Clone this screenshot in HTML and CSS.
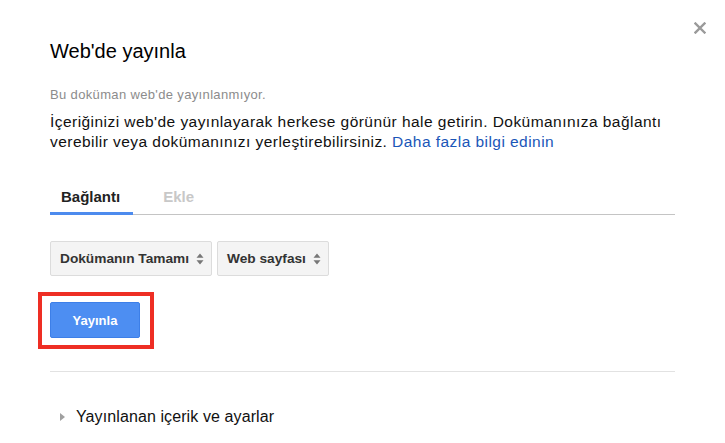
FILE: index.html
```html
<!DOCTYPE html>
<html lang="tr">
<head>
<meta charset="utf-8">
<title>Web'de yayınla</title>
<link rel="stylesheet" href="styles.css">
</head>
<body>
<div class="dialog">
  <button class="close" aria-label="Kapat">
    <svg width="12" height="12" viewBox="0 0 12 12"><path d="M1.5 1.5 L10.5 10.5 M10.5 1.5 L1.5 10.5" stroke="#9a9a9a" stroke-width="2.4" stroke-linecap="square" fill="none"/></svg>
  </button>
  <h1 class="title">Web'de yayınla</h1>
  <p class="status">Bu doküman web'de yayınlanmıyor.</p>
  <p class="desc">İçeriğinizi web'de yayınlayarak herkese görünür hale getirin. Dokümanınıza bağlantı verebilir veya dokümanınızı yerleştirebilirsiniz. <a class="link" href="#">Daha fazla bilgi edinin</a></p>
  <div class="tabs">
    <div class="tab active">Bağlantı</div>
    <div class="tab">Ekle</div>
  </div>
  <div class="selects">
    <div class="select">Dokümanın Tamamı<span class="arrows"><svg width="8" height="12" viewBox="0 0 8 12"><path d="M4 0.5 L7.5 4.8 L0.5 4.8 Z M4 11.5 L7.5 7.2 L0.5 7.2 Z" fill="#777"/></svg></span></div>
    <div class="select">Web sayfası<span class="arrows"><svg width="8" height="12" viewBox="0 0 8 12"><path d="M4 0.5 L7.5 4.8 L0.5 4.8 Z M4 11.5 L7.5 7.2 L0.5 7.2 Z" fill="#777"/></svg></span></div>
  </div>
  <div class="highlight">
    <button class="publish">Yayınla</button>
  </div>
  <hr class="divider">
  <div class="expander">
    <svg class="tri" width="5" height="8" viewBox="0 0 5 8"><path d="M0 0 L5 4 L0 8 Z" fill="#a0a0a0"/></svg>
    <span>Yayınlanan içerik ve ayarlar</span>
  </div>
</div>
</body>
</html>
```
FILE: styles.css
```css
html, body {
  margin: 0;
  padding: 0;
  background: #fff;
}
body {
  font-family: "Liberation Sans", Arial, sans-serif;
  color: #222;
}
.dialog {
  width: 625px;
  padding: 40px 50px 0 50px;
}
.close {
  position: absolute;
  top: 22px;
  left: 694px;
  width: 12px;
  height: 12px;
  padding: 0;
  border: 0;
  background: none;
  display: block;
}
.close svg { display: block; }
.title {
  margin: 0;
  font-size: 20px;
  font-weight: normal;
  line-height: 23px;
  color: #000;
}
.status {
  margin: 24px 0 0 0;
  font-size: 13px;
  letter-spacing: 0.35px;
  line-height: 16px;
  color: #8c8c8c;
}
.desc {
  width: 625px;
  margin: 9px 0 0 0;
  font-size: 15.5px;
  letter-spacing: 0.45px;
  line-height: 20px;
  color: #111;
}
.link {
  color: #1a56b8;
  text-decoration: none;
}
.tabs {
  margin-top: 35px;
  display: flex;
  border-bottom: 1px solid #c4c4c4;
  height: 27px;
}
.tab {
  font-size: 15px;
  font-weight: bold;
  line-height: 20px;
  padding: 0 13px 5px 11px;
  color: #c8c8c8;
  margin-right: 19px;
}
.tab.active {
  color: #222;
  border-bottom: 3px solid #4d8bee;
  height: 20px;
  margin-bottom: -1px;
}
.selects {
  margin-top: 26px;
  display: flex;
  gap: 5px;
}
.select {
  height: 33px;
  display: flex;
  align-items: center;
  padding: 0 7px 0 9px;
  border: 1px solid #dcdcdc;
  border-radius: 2px;
  background: #f4f4f4;
  font-size: 13.7px;
  font-weight: bold;
  color: #333;
}
.arrows {
  display: flex;
  margin-left: 7px;
}
.highlight {
  margin: 16px 0 0 -12px;
  display: inline-block;
  border: 4px solid #ee2e24;
  padding: 6px 10px 7px 8px;
}
.publish {
  display: block;
  width: 90px;
  height: 36px;
  border: 1px solid #3d7fe8;
  border-radius: 2px;
  background: #4d8ef2;
  color: #fff;
  font-family: "Liberation Sans", Arial, sans-serif;
  font-size: 13px;
  font-weight: bold;
  padding: 0;
}
.divider {
  margin: 22px 0 0 0;
  border: 0;
  border-top: 1px solid #e2e2e2;
  height: 0;
}
.expander {
  margin-top: 35px;
  display: flex;
  align-items: center;
  font-size: 16px;
  letter-spacing: 0.1px;
  line-height: 20px;
  color: #111;
}
.tri {
  margin: 0 11px 0 10px;
}
```
